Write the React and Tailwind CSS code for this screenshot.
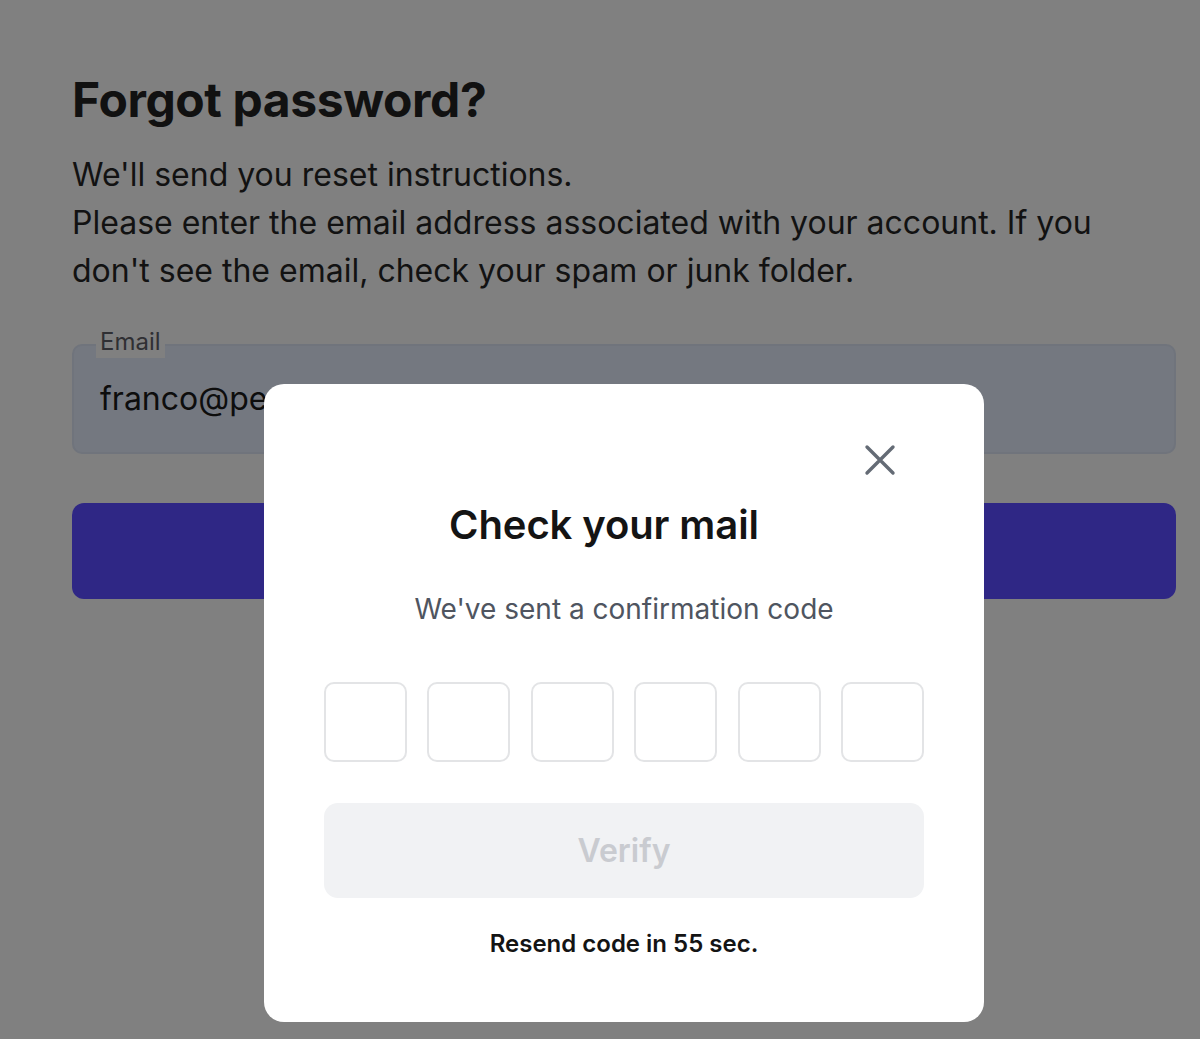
import React from "react";

export default function App() {
  return (
    <div
      className="relative min-h-[1039px] w-[1200px] overflow-hidden bg-[#808080] pl-[72px] pr-[24px] pt-[72px]"
      style={{ fontFamily: "Inter, 'Noto Sans', sans-serif" }}
    >
      <h1 className="text-[48px] font-bold leading-[56px] tracking-[-0.4px] text-[#111111]">
        Forgot password?
      </h1>
      <p className="mt-[23px] max-w-[1056px] text-[32px] leading-[48px] text-[#121212]">
        We'll send you reset instructions.
        <br />
        Please enter the email address associated with your account. If you
        don't see the email, check your spam or junk folder.
      </p>

      <div className="relative mt-[49px] h-[110px] rounded-[10px] border-2 border-[#70747c] bg-[#747880]">
        <span className="absolute left-[22px] top-[-20px] bg-[#808080] px-[4px] text-[24px] leading-[32px] text-[#2f2f33]">
          Email
        </span>
        <div className="flex h-full items-center pl-[26px] text-[32px] text-[#0d0d0d]">
          franco@pedidosya.com
        </div>
      </div>

      <div className="mt-[49px] h-[96px] rounded-[12px] bg-[#2f2785]" />

      <div className="absolute left-[264px] top-[384px] flex h-[638px] w-[720px] flex-col items-center rounded-[20px] bg-white px-[60px] pt-[117px]">
        <button className="absolute right-[88px] top-[60px] flex h-[32px] w-[32px] items-center justify-center">
          <svg width="32" height="32" viewBox="0 0 32 32" fill="none">
            <path
              d="M3 3L29 29M29 3L3 29"
              stroke="#646b75"
              strokeWidth="3.4"
              strokeLinecap="round"
            />
          </svg>
        </button>
        <h2 className="w-full pr-[40px] text-center text-[40px] font-semibold leading-[48px] tracking-[-0.1px] text-[#141414]">
          Check your mail
        </h2>
        <p className="mt-[40px] text-center text-[28px] leading-[40px] text-[#4f5560]">
          We've sent a confirmation code
        </p>
        <div className="mt-[53px] flex w-full justify-between">
          {[0, 1, 2, 3, 4, 5].map((i) => (
            <div
              key={i}
              className="h-[80px] w-[83px] rounded-[10px] border-2 border-[#e3e4e6] bg-white"
            />
          ))}
        </div>
        <div className="mt-[41px] flex h-[95px] w-full items-center justify-center rounded-[14px] bg-[#f1f2f4] text-[32px] font-semibold text-[#c9cbd0]">
          Verify
        </div>
        <p className="mt-[30px] text-center text-[24px] font-semibold leading-[32px] text-[#141414]">
          Resend code in 55 sec.
        </p>
      </div>
    </div>
  );
}
